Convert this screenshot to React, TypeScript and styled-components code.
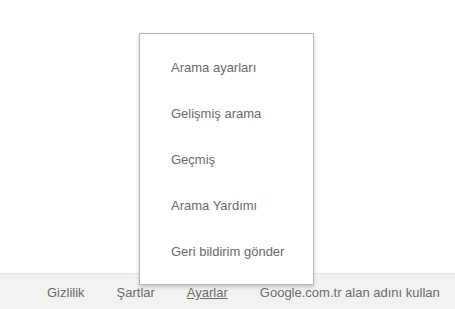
import React from "react";
import styled, { createGlobalStyle } from "styled-components";

const GlobalStyle = createGlobalStyle`
  html, body {
    margin: 0;
    padding: 0;
    background: #ffffff;
    font-family: "Liberation Sans", Arial, sans-serif;
  }
`;

const menuItems = [
  "Arama ayarları",
  "Gelişmiş arama",
  "Geçmiş",
  "Arama Yardımı",
  "Geri bildirim gönder",
];

const footerLinks = [
  { label: "Gizlilik" },
  { label: "Şartlar" },
  { label: "Ayarlar", active: true },
  { label: "Google.com.tr alan adını kullan" },
];

const App: React.FC = () => {
  return (
    <>
      <GlobalStyle />
      <Page>
        <Content />
        <Footer>
          {footerLinks.map((link) => (
            <FooterLink key={link.label} $active={link.active}>
              {link.label}
            </FooterLink>
          ))}
        </Footer>
        <Menu>
          {menuItems.map((item) => (
            <MenuItem key={item}>{item}</MenuItem>
          ))}
        </Menu>
      </Page>
    </>
  );
};

export default App;

const Page = styled.div`
  position: relative;
  display: flex;
  flex-direction: column;
  width: 100%;
  height: 309px;
  overflow: hidden;
`;

const Content = styled.div`
  flex: 1;
`;

const Footer = styled.div`
  display: flex;
  align-items: center;
  height: 33px;
  padding-left: 47px;
  padding-top: 2px;
  gap: 32px;
  background-color: #f2f2f2;
  border-top: 1px solid #e4e4e4;
`;

const FooterLink = styled.span<{ $active?: boolean }>`
  font-size: 13px;
  color: #6a6a6a;
  text-decoration: ${(p) => (p.$active ? "underline" : "none")};
  white-space: nowrap;
  cursor: pointer;
`;

const Menu = styled.div`
  position: absolute;
  left: 139px;
  top: 33px;
  width: 173px;
  padding: 10px 0;
  background-color: #ffffff;
  border: 1px solid #b8b8b8;
  box-shadow: 0 2px 4px rgba(0, 0, 0, 0.2);
  display: flex;
  flex-direction: column;
`;

const MenuItem = styled.div`
  height: 46px;
  display: flex;
  align-items: center;
  padding-left: 31px;
  font-size: 13px;
  color: #6a6a6a;
  white-space: nowrap;
  cursor: pointer;
`;
